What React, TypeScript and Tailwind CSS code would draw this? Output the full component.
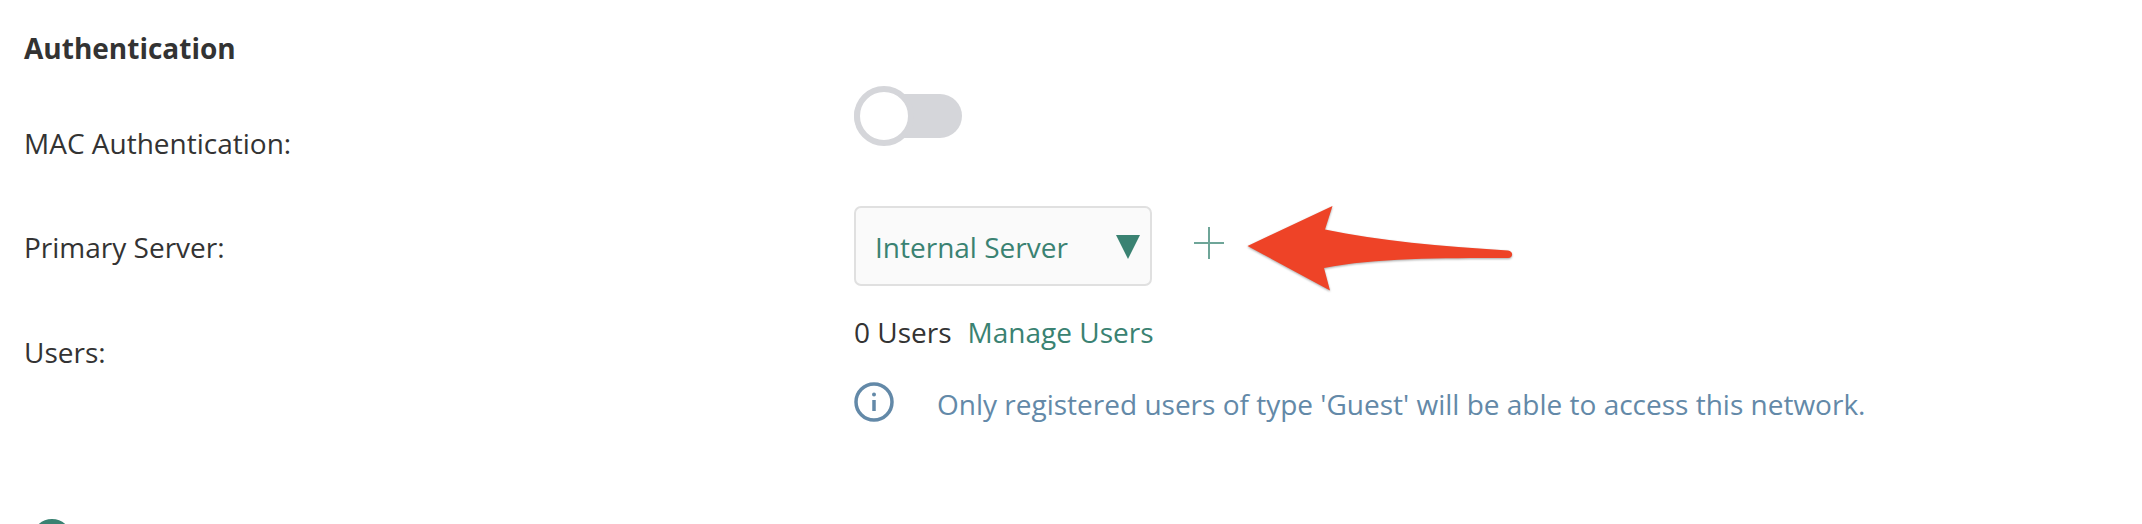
const sans = { fontFamily: '"Open Sans", sans-serif' };

function Arrow() {
  return (
    <svg
      className="absolute left-[1240px] top-[200px] drop-shadow-[0_1px_1px_rgba(0,0,0,0.35)]"
      width="280"
      height="96"
      viewBox="1240 200 280 96"
    >
      <path
        d="M1247.5 246 L1332.5 206 L1325 229.5 C1380 241 1440 246 1508 250.5 C1513.5 251 1513.5 258 1508 258 C1440 258 1375 258 1324 268 L1330 290.5 Z"
        fill="#ee4327"
      />
    </svg>
  );
}

export default function App() {
  return (
    <div
      className="relative h-[524px] w-[2142px] overflow-hidden bg-white text-[28px] text-[#333333]"
      style={sans}
    >
      <div className="pl-[24px] pt-[30px]">
        <h2 className="h-[36px] text-[28px] leading-[36px] font-bold">Authentication</h2>
        <div className="flex">
          <div className="flex w-[830px] flex-col pt-[59px]">
            <div className="h-[36px] leading-[36px]">MAC Authentication:</div>
            <div className="mt-[68px] h-[36px] leading-[36px]">Primary Server:</div>
            <div className="mt-[69px] h-[36px] leading-[36px]">Users:</div>
          </div>
          <div className="flex flex-col pt-[20px]">
            <div className="relative h-[60px] w-[108px]">
              <div className="absolute left-0 top-[8px] h-[44px] w-[108px] rounded-full bg-[#d5d6da]" />
              <div className="absolute left-0 top-0 h-[60px] w-[60px] rounded-full border-[6px] border-[#d5d6da] bg-white" />
            </div>
            <div className="mt-[60px] flex items-center gap-[41px]">
              <div className="flex h-[80px] w-[298px] items-center justify-between rounded-[7px] border-2 border-[#e0e0e0] bg-[#fafafa] pl-[19px] pr-[10px] text-[#3a8272]">
                <span className="mt-[2px] leading-[36px]">Internal Server</span>
                <svg width="24" height="24" viewBox="0 0 24 24" className="mt-[1px]">
                  <path d="M0 0 H24 L12 24 Z" fill="#3a8272" />
                </svg>
              </div>
              <svg width="32" height="32" viewBox="0 0 32 32" className="mb-[6px]">
                <path d="M16 0 V32 M1 16 H31" stroke="#6ea598" strokeWidth="2" />
              </svg>
            </div>
            <div className="mt-[28px] flex h-[36px] items-center gap-[16px] leading-[36px]">
              <span>0 Users</span>
              <span className="text-[#3a8272]">Manage Users</span>
            </div>
            <div className="mt-[31px] flex items-center gap-[43px] text-[#6389a8]">
              <svg width="40" height="40" viewBox="0 0 40 40">
                <circle cx="20" cy="20" r="18" fill="none" stroke="#6389a8" strokeWidth="3.5" />
                <circle cx="20" cy="12.5" r="2" fill="#6389a8" />
                <path d="M20 18 V29" stroke="#6389a8" strokeWidth="3.5" />
              </svg>
              <span className="mt-[5px] leading-[36px]">
                Only registered users of type 'Guest' will be able to access this network.
              </span>
            </div>
          </div>
        </div>
      </div>
      <div className="ml-[32px] mt-[97px] h-[40px] w-[40px] rounded-full border-[5px] border-[#3a8272]" />
      <Arrow />
    </div>
  );
}
